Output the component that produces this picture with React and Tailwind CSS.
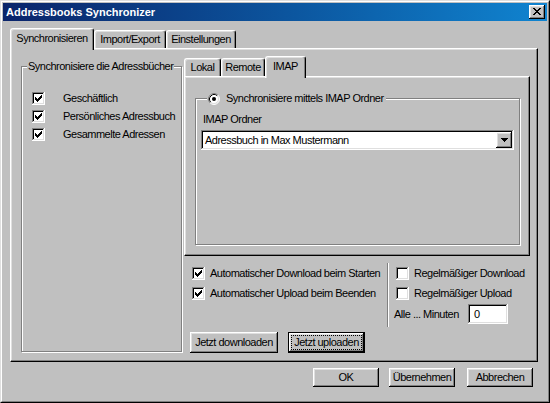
import React from "react";

const raised =
  "bg-[#c0c0c0] shadow-[inset_-1px_-1px_#000000,inset_1px_1px_#ffffff,inset_-2px_-2px_#808080,inset_2px_2px_#dfdfdf]";
const sunken =
  "bg-white shadow-[inset_-1px_-1px_#ffffff,inset_1px_1px_#808080,inset_-2px_-2px_#dfdfdf,inset_2px_2px_#000000]";
const etched = "border border-[#808080] shadow-[inset_1px_1px_#ffffff,1px_1px_#ffffff]";
const panel =
  "bg-[#c0c0c0] border border-t-white border-l-white border-r-black border-b-black shadow-[inset_-1px_-1px_#808080,inset_1px_1px_#dfdfdf]";
const tabBase =
  "flex items-center justify-center shrink-0 border-t border-l border-r border-t-white border-l-white border-r-black rounded-t-[3px] shadow-[inset_-1px_0_#808080,inset_1px_1px_#dfdfdf] bg-[#c0c0c0]";

function Check({ checked }) {
  return (
    <div className={`w-[13px] h-[13px] shrink-0 flex pl-[3px] pt-[3px] ${sunken}`}>
      {checked && (
        <svg width="7" height="7" viewBox="0 0 7 7" shapeRendering="crispEdges">
          <path
            d="M0 2h1v3H0zM1 3h1v3H1zM2 4h1v3H2zM3 3h1v3H3zM4 2h1v3H4zM5 1h1v3H5zM6 0h1v3H6z"
            fill="#000"
          />
        </svg>
      )}
    </div>
  );
}

function Radio() {
  return (
    <svg width="12" height="12" viewBox="0 0 12 12" className="shrink-0">
      <circle cx="6" cy="6" r="5" fill="#fff" />
      <path d="M2.11 9.89A5.5 5.5 0 0 1 9.89 2.11" stroke="#808080" fill="none" />
      <path d="M9.89 2.11A5.5 5.5 0 0 1 2.11 9.89" stroke="#fff" fill="none" />
      <path d="M2.82 9.18A4.5 4.5 0 0 1 9.18 2.82" stroke="#000" fill="none" />
      <path d="M9.18 2.82A4.5 4.5 0 0 1 2.82 9.18" stroke="#dfdfdf" fill="none" />
      <circle cx="6" cy="6" r="2" fill="#000" />
    </svg>
  );
}

function Btn({ w, h, children, isDefault, ml }) {
  if (isDefault) {
    return (
      <div className={`border border-black shrink-0 ${ml}`} style={{ width: w, height: h }}>
        <div className={`w-full h-full flex p-[3px] ${raised}`}>
          <div className="flex-1 flex items-center justify-center outline-1 outline-dotted outline-black">
            {children}
          </div>
        </div>
      </div>
    );
  }
  return (
    <div className={`flex items-center justify-center shrink-0 ${raised} ${ml}`} style={{ width: w, height: h }}>
      {children}
    </div>
  );
}

export default function App() {
  return (
    <div className="w-[550px] h-[403px] font-['Liberation_Sans',Arial,sans-serif] text-[11px] leading-[13px] tracking-[-0.5px] text-black bg-[#c0c0c0]">
      <div className="w-full h-full border border-t-[#dfdfdf] border-l-[#dfdfdf] border-r-black border-b-black">
        <div className="w-full h-full border border-t-white border-l-white border-r-[#808080] border-b-[#808080] p-px flex flex-col">
          {/* Title bar */}
          <div className="h-[18px] shrink-0 flex items-center bg-gradient-to-r from-[#0a246a] to-[#1084d0] pl-[3px] pr-[2px]">
            <span className="font-bold text-white tracking-normal">Addressbooks Synchronizer</span>
            <div className={`ml-auto w-[16px] h-[14px] flex pl-[4px] pt-[3px] ${raised}`}>
              <svg width="8" height="7" viewBox="0 0 8 7" shapeRendering="crispEdges">
                <path
                  d="M0 0h2v1H0zM6 0h2v1H6zM1 1h2v1H1zM5 1h2v1H5zM2 2h4v1H2zM3 3h2v1H3zM2 4h4v1H2zM1 5h2v1H1zM5 5h2v1H5zM0 6h2v1H0zM6 6h2v1H6z"
                  fill="#000"
                />
              </svg>
            </div>
          </div>

          {/* Main tabs */}
          <div className="ml-[7px] h-[27px] flex items-end shrink-0">
            <div className={`${tabBase} w-[84px] h-[22px] -mb-[2px] relative z-10 pb-[2px]`}>Synchronisieren</div>
            <div className={`${tabBase} w-[72px] h-[18px]`}>Import/Export</div>
            <div className={`${tabBase} w-[70px] h-[18px]`}>Einstellungen</div>
          </div>

          {/* Main panel */}
          <div className={`${panel} ml-[7px] w-[528px] h-[314px] shrink-0 flex items-start`}>
            {/* Left group box */}
            <div className={`relative ${etched} w-[161px] h-[286px] ml-[10px] mt-[17px] shrink-0`}>
              <span className="absolute left-[5px] top-[-7px] px-[1px] bg-[#c0c0c0] whitespace-nowrap">
                Synchronisiere die Adressbücher
              </span>
              <div className="flex flex-col pt-[22px] pl-[10px]">
                {["Geschäftlich", "Persönliches Adressbuch", "Gesammelte Adressen"].map((t) => (
                  <div key={t} className="flex items-center h-[18px]">
                    <Check checked />
                    <span className="ml-[18px] whitespace-nowrap">{t}</span>
                  </div>
                ))}
              </div>
            </div>

            {/* Right column */}
            <div className="ml-[2px] w-[346px] flex flex-col shrink-0">
              <div className="h-[27px] flex items-end">
                <div className={`${tabBase} w-[37px] h-[18px]`}>Lokal</div>
                <div className={`${tabBase} w-[44px] h-[18px]`}>Remote</div>
                <div className={`${tabBase} w-[41px] h-[22px] -mb-[2px] relative z-10 pb-[2px]`}>IMAP</div>
              </div>
              <div className={`${panel} w-[346px] h-[180px] flex items-start`}>
                <div className={`relative ${etched} ml-[10px] mt-[21px] w-[325px] h-[147px] shrink-0`}>
                  <div className="absolute left-[11px] top-[-7px] pl-[1px] pr-[2px] h-[13px] flex items-center bg-[#c0c0c0] whitespace-nowrap">
                    <Radio />
                    <span className="ml-[6px]">Synchronisiere mittels IMAP Ordner</span>
                  </div>
                  <div className="flex flex-col pt-[14px]">
                    <span className="ml-[7px] h-[13px]">IMAP Ordner</span>
                    <div className={`ml-[5px] mt-[4px] w-[313px] h-[20px] flex items-center p-[2px] ${sunken}`}>
                      <span className="flex-1 pl-[2px] whitespace-nowrap">Adressbuch in Max Mustermann</span>
                      <div className={`w-[16px] h-[16px] flex items-center justify-center ${raised}`}>
                        <svg width="7" height="4" viewBox="0 0 7 4" shapeRendering="crispEdges">
                          <path d="M0 0h7v1H0zM1 1h5v1H1zM2 2h3v1H2zM3 3h1v1H3z" fill="#000" />
                        </svg>
                      </div>
                    </div>
                  </div>
                </div>
              </div>

              {/* Lower area */}
              <div className="h-[72px] flex">
                <div className="w-[203px] pt-[7px] pl-[8px] flex flex-col">
                  {["Automatischer Download beim Starten", "Automatischer Upload beim Beenden"].map((t) => (
                    <div key={t} className="flex items-center h-[20px]">
                      <Check checked />
                      <span className="ml-[5px] whitespace-nowrap">{t}</span>
                    </div>
                  ))}
                </div>
                <div className="mt-[7px] h-[64px] w-[2px] border-l border-l-[#808080] border-r border-r-white" />
                <div className="pt-[7px] pl-[5px] flex flex-col">
                  {["Regelmäßiger Download", "Regelmäßiger Upload"].map((t) => (
                    <div key={t} className="flex items-center h-[20px] ml-[2px]">
                      <Check />
                      <span className="ml-[5px] whitespace-nowrap">{t}</span>
                    </div>
                  ))}
                  <div className="flex items-center h-[20px] mt-px">
                    <span className="w-[74px] whitespace-nowrap">Alle ... Minuten</span>
                    <div className={`w-[40px] h-[20px] flex items-center pl-[6px] ${sunken}`}>0</div>
                  </div>
                </div>
              </div>
              <div className="flex mt-[4px]">
                <Btn w={88} h={21} ml="ml-[6px]">Jetzt downloaden</Btn>
                <Btn w={77} h={21} ml="ml-[10px]" isDefault>Jetzt uploaden</Btn>
              </div>
            </div>
          </div>

          {/* Bottom buttons */}
          <div className="flex mt-[6px] ml-[310px]">
            <Btn w={66} h={19}>OK</Btn>
            <Btn w={66} h={19} ml="ml-[10px]">Übernehmen</Btn>
            <Btn w={66} h={19} ml="ml-[12px]">Abbrechen</Btn>
          </div>
        </div>
      </div>
    </div>
  );
}
